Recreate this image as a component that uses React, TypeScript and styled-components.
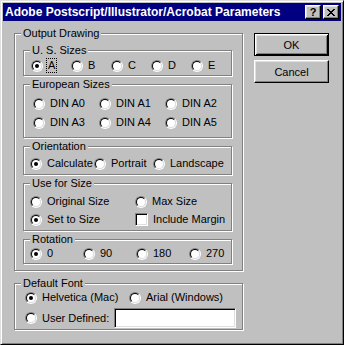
import React from 'react';
import styled, { createGlobalStyle, css } from 'styled-components';

const GlobalStyle = createGlobalStyle`
  html, body {
    margin: 0;
    padding: 0;
    background: #c0c0c0;
  }
  body {
    font-family: "Liberation Sans", Arial, sans-serif;
    font-size: 11px;
    color: #000;
  }
`;

interface OptionDef {
  label: string;
  checked?: boolean;
  focus?: boolean;
}

const RadioOption = ({ label, checked, focus, w }: OptionDef & { w?: number }) => (
  <Option $w={w}>
    <RadioRing>
      <RadioWell>{checked && <RadioDot />}</RadioWell>
    </RadioRing>
    <OptionText $focus={focus}>{label}</OptionText>
  </Option>
);

const CheckOption = ({ label, w }: { label: string; w?: number }) => (
  <Option $w={w}>
    <CheckBox />
    <OptionText>{label}</OptionText>
  </Option>
);

const CloseGlyph = () => (
  <svg width="8" height="7" viewBox="0 0 8 7" shapeRendering="crispEdges">
    <path
      d="M0 0h2v1H0zM6 0h2v1H6zM1 1h2v1H1zM5 1h2v1H5zM2 2h4v1H2zM3 3h2v1H3zM2 4h4v1H2zM1 5h2v1H1zM5 5h2v1H5zM0 6h2v1H0zM6 6h2v1H6z"
      fill="#000"
    />
  </svg>
);

const App = () => (
  <>
    <GlobalStyle />
    <Window>
      <TitleBar>
        <TitleText>Adobe Postscript/Illustrator/Acrobat Parameters</TitleText>
        <CaptionButtons>
          <CaptionButton>?</CaptionButton>
          <CaptionButton><CloseGlyph /></CaptionButton>
        </CaptionButtons>
      </TitleBar>

      <Body>
        <LeftColumn>
          <Group $w={229}>
            <Legend>Output Drawing</Legend>
            <GroupBody $pad="4px 0 6px 8px" $gap={2}>
              <Group $w={209}>
                <Legend>U. S. Sizes</Legend>
                <GroupBody $pad="2px 0 3px 7px">
                  <Row>
                    <RadioOption w={40} label="A" checked focus />
                    <RadioOption w={40} label="B" />
                    <RadioOption w={40} label="C" />
                    <RadioOption w={40} label="D" />
                    <RadioOption label="E" />
                  </Row>
                </GroupBody>
              </Group>

              <Group $w={209}>
                <Legend>European Sizes</Legend>
                <GroupBody $pad="6px 0 8px 9px" $gap={6}>
                  <Row>
                    <RadioOption w={66} label="DIN A0" />
                    <RadioOption w={66} label="DIN A1" />
                    <RadioOption label="DIN A2" />
                  </Row>
                  <Row>
                    <RadioOption w={66} label="DIN A3" />
                    <RadioOption w={66} label="DIN A4" />
                    <RadioOption label="DIN A5" />
                  </Row>
                </GroupBody>
              </Group>

              <Group $w={209}>
                <Legend>Orientation</Legend>
                <GroupBody $pad="4px 0 4px 6px">
                  <Row>
                    <RadioOption w={64} label="Calculate" checked />
                    <RadioOption w={59} label="Portrait" />
                    <RadioOption label="Landscape" />
                  </Row>
                </GroupBody>
              </Group>

              <Group $w={209}>
                <Legend>Use for Size</Legend>
                <GroupBody $pad="5px 0 4px 6px" $gap={5}>
                  <Row>
                    <RadioOption w={105} label="Original Size" />
                    <RadioOption label="Max Size" />
                  </Row>
                  <Row>
                    <RadioOption w={105} label="Set to Size" checked />
                    <CheckOption label="Include Margin" />
                  </Row>
                </GroupBody>
              </Group>

              <Group $w={209}>
                <Legend>Rotation</Legend>
                <GroupBody $pad="1px 0 3px 6px">
                  <Row>
                    <RadioOption w={53} label="0" checked />
                    <RadioOption w={53} label="90" />
                    <RadioOption w={53} label="180" />
                    <RadioOption label="270" />
                  </Row>
                </GroupBody>
              </Group>
            </GroupBody>
          </Group>

          <Group $w={229}>
            <Legend>Default Font</Legend>
            <GroupBody $pad="1px 0 1px 10px" $gap={4}>
              <Row>
                <RadioOption w={104} label="Helvetica (Mac)" checked />
                <RadioOption label="Arial (Windows)" />
              </Row>
              <Row>
                <RadioOption w={89} label="User Defined:" />
                <TextField type="text" defaultValue="" />
              </Row>
            </GroupBody>
          </Group>
        </LeftColumn>

        <RightColumn>
          <DialogButton $default>OK</DialogButton>
          <DialogButton>Cancel</DialogButton>
        </RightColumn>
      </Body>
    </Window>
  </>
);

export default App;

// Window frame
const Window = styled.div`
  width: 344px;
  height: 345px;
  box-sizing: border-box;
  background: #c0c0c0;
  border: 1px solid;
  border-color: #dfdfdf #000 #000 #dfdfdf;
  box-shadow: inset 1px 1px #fff, inset -1px -1px #808080;
  padding: 2px;
  display: flex;
  flex-direction: column;
`;

// Title bar
const TitleBar = styled.div`
  height: 18px;
  flex: none;
  display: flex;
  align-items: center;
  padding: 0 2px;
  background: #000080;
  color: #fff;
`;
const TitleText = styled.span`
  font-weight: bold;
  font-size: 12px;
  white-space: nowrap;
`;
const CaptionButtons = styled.div`
  margin-left: auto;
  display: flex;
  gap: 2px;
`;
const raised = css`
  border: 1px solid;
  border-color: #fff #000 #000 #fff;
  box-shadow: inset -1px -1px #808080, inset 1px 1px #dfdfdf;
`;
const CaptionButton = styled.div`
  width: 16px;
  height: 14px;
  box-sizing: border-box;
  background: #c0c0c0;
  ${raised};
  display: flex;
  align-items: center;
  justify-content: center;
  color: #000;
  font-weight: bold;
  font-size: 11px;
  line-height: 11px;
`;

// Dialog body
const Body = styled.div`
  display: flex;
  gap: 11px;
  padding: 6px 0 0 11px;
`;
const LeftColumn = styled.div`
  display: flex;
  flex-direction: column;
  gap: 6px;
`;
const RightColumn = styled.div`
  display: flex;
  flex-direction: column;
  gap: 4px;
  padding-top: 6px;
`;

// Group box
const Group = styled.fieldset<{ $w: number }>`
  margin: 0;
  padding: 0;
  min-width: 0;
  width: ${(p) => p.$w}px;
  box-sizing: border-box;
  border: 1px solid #808080;
  box-shadow: inset 1px 1px #fff, 1px 1px #fff;
`;
const Legend = styled.legend`
  margin-left: 6px;
  padding: 0 2px;
  line-height: 13px;
  background: #c0c0c0;
`;
const GroupBody = styled.div<{ $pad: string; $gap?: number }>`
  display: flex;
  flex-direction: column;
  gap: ${(p) => p.$gap || 0}px;
  padding: ${(p) => p.$pad};
`;
const Row = styled.div`
  display: flex;
  align-items: center;
  min-height: 13px;
`;

// Options
const Option = styled.label<{ $w?: number }>`
  display: flex;
  align-items: center;
  flex: none;
  width: ${(p) => (p.$w ? `${p.$w}px` : 'auto')};
  height: 13px;
  white-space: nowrap;
`;
const OptionText = styled.span<{ $focus?: boolean }>`
  margin-left: 5px;
  line-height: 13px;
  ${(p) => p.$focus && css`
    margin-left: 4px;
    padding: 0 1px;
    outline: 1px dotted #000;
  `}
`;
const RadioRing = styled.span`
  width: 12px;
  height: 12px;
  box-sizing: border-box;
  flex: none;
  border-radius: 50%;
  border: 1px solid;
  border-color: #808080 #fff #fff #808080;
  display: flex;
  align-items: center;
  justify-content: center;
`;
const RadioWell = styled.span`
  width: 10px;
  height: 10px;
  box-sizing: border-box;
  border-radius: 50%;
  border: 1px solid;
  border-color: #000 #dfdfdf #dfdfdf #000;
  background: #fff;
  display: flex;
  align-items: center;
  justify-content: center;
`;
const RadioDot = styled.span`
  width: 4px;
  height: 4px;
  border-radius: 50%;
  background: #000;
`;
const CheckBox = styled.span`
  width: 13px;
  height: 13px;
  box-sizing: border-box;
  flex: none;
  background: #fff;
  border: 1px solid;
  border-color: #808080 #fff #fff #808080;
  box-shadow: inset 1px 1px #000, inset -1px -1px #dfdfdf;
`;
const TextField = styled.input`
  width: 122px;
  height: 20px;
  box-sizing: border-box;
  margin: 0;
  padding: 0 2px;
  background: #fff;
  border: 1px solid;
  border-color: #808080 #fff #fff #808080;
  box-shadow: inset 1px 1px #000, inset -1px -1px #dfdfdf;
  outline: none;
  font: 11px "Liberation Sans", Arial, sans-serif;
`;

// Push buttons
const DialogButton = styled.button<{ $default?: boolean }>`
  width: 75px;
  height: 23px;
  box-sizing: border-box;
  margin: 0;
  padding: 0;
  background: #c0c0c0;
  color: #000;
  font: 11px "Liberation Sans", Arial, sans-serif;
  ${raised};
  ${(p) => p.$default && css`
    border-color: #000;
    box-shadow: inset 1px 1px #fff, inset -1px -1px #000, inset 2px 2px #dfdfdf, inset -2px -2px #808080;
  `}
`;
